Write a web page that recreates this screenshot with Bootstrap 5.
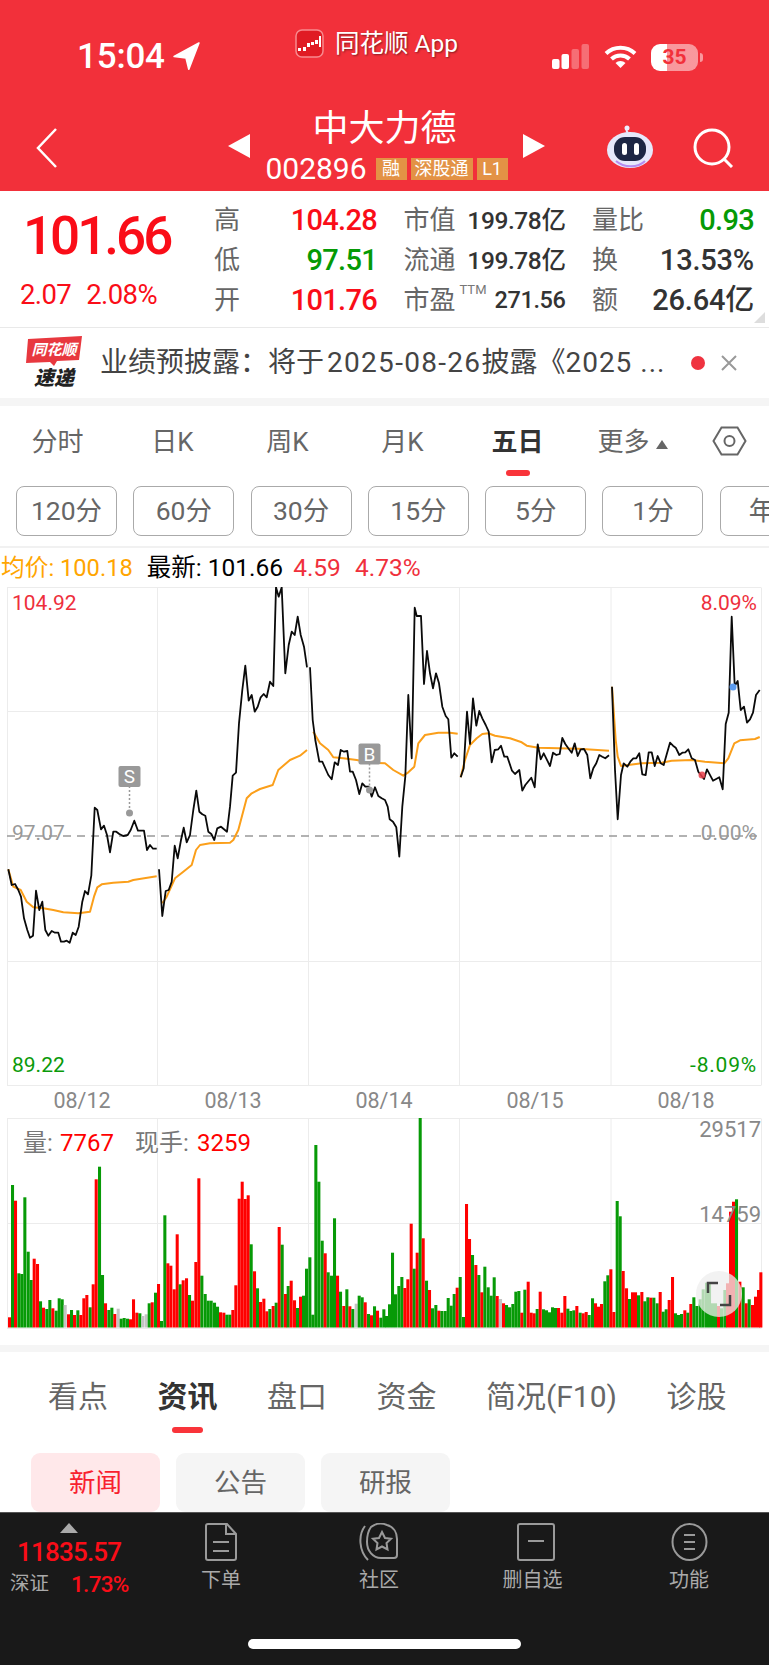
<!doctype html>
<html lang="zh"><head><meta charset="utf-8">
<link href="https://cdn.jsdelivr.net/npm/bootstrap@5.3.0/dist/css/bootstrap.min.css" rel="stylesheet">
<style>
html,body{margin:0;background:#fff;}
body{width:769px;height:1665px;overflow:hidden;font-family:Roboto,"Noto Sans CJK SC",sans-serif;color:#333;}
.hq-head{background:#f2303a;height:191px;color:#fff;}
.hq-status{height:100px;}
.hq-time{width:260px;padding:38px 0 0 77px;font-size:35px;line-height:38px;font-weight:500;letter-spacing:-.2px;gap:7px;}
.hq-app{width:292px;padding:29px 0 0 35px;gap:11px;font-size:24.5px;line-height:30px;text-shadow:1px 1px 2px rgba(0,0,0,.45);}
.hq-sys{padding:44px 0 0 0;gap:14px;}
.hq-batt{width:47px;height:27px;border-radius:9px;background:linear-gradient(90deg,#fff 35%,rgba(255,255,255,.5) 35%);color:#f2303a;font-size:21px;line-height:27px;font-weight:700;text-align:center;}
.hq-nub{width:3px;height:9px;border-radius:0 3px 3px 0;background:rgba(255,255,255,.5);margin-left:2px;}
.hq-nav{height:91px;}
.hq-back{width:228px;padding:28px 0 0 36px;}
.hq-mid{width:317px;}
.hq-title{font-size:36px;line-height:40px;padding-top:9px;padding-right:4px;}
.hq-code{font-size:30px;line-height:28px;gap:4px;margin-top:6px;white-space:nowrap;}
.hq-tag{flex:none;background:#e39245;font-size:18px;line-height:22px;height:22px;width:31px;margin-top:3px;}
.hq-tag1{margin-left:5px;}
.hq-tag3{width:62px;}
.hq-right{padding:25px 0 0 61px;gap:39px;}
.hq-info{height:137px;border-bottom:1px solid #e9e9e9;}
.hq-priceb{width:214px;}
.hq-price{font-size:53px;line-height:60px;font-weight:500;color:#fa0d18;padding:15px 0 0 23px;letter-spacing:-3px;}
.hq-chg{color:#fa0d18;font-size:27.5px;line-height:30px;padding:14px 0 0 20px;gap:15px;letter-spacing:-.6px;}
.hq-grid{display:grid;grid-template-columns:163px 162px 162px;column-gap:26.5px;grid-auto-rows:40px;padding-top:10px;}
.hq-cell{line-height:39px;}
.hq-lab{font-size:26px;color:#666;}
.hq-val{font-size:29px;font-weight:500;letter-spacing:-.7px;}
.hq-val2{font-size:24.5px;font-weight:500;letter-spacing:-.4px;color:#333;}
.hq-val3{font-size:29px;font-weight:500;letter-spacing:-.2px;color:#333;}
.hq-red{color:#fa0d18;}.hq-green{color:#059a05;}
.hq-ttmw{line-height:16px;padding-left:4px;}
.hq-ttm{font-size:13px;color:#777;}
.hq-pe{font-size:23.5px;}
.hq-corner{position:absolute;right:4px;bottom:4px;border-left:11px solid transparent;border-bottom:11px solid #ddd;}
.hq-notice{height:70px;padding-left:25px;}
.hq-ntext{font-size:28px;line-height:36px;color:#444;margin-left:17px;width:576px;white-space:nowrap;}
.hq-ndig{letter-spacing:1.3px;margin-left:3px;}
.hq-ndig2{letter-spacing:1px;}
.hq-dot{width:14px;height:14px;border-radius:50%;background:#ef3340;margin-left:15px;}
.hq-band{height:8px;background:#f5f5f5;}
.hq-tabs{height:80px;}
.hq-tab{width:115px;text-align:center;font-size:26px;line-height:30px;color:#666;position:relative;padding-top:21px;height:80px;}
.hq-tab-on{color:#333;font-weight:700;}
.hq-tab-on::after{content:"";position:absolute;left:46px;top:64px;width:24px;height:6px;border-radius:3px;background:#f9343a;}
.hq-tri{display:inline-block;border:6px solid transparent;border-top:0;border-bottom:9px solid #666;margin-left:6px;vertical-align:middle;}
.hq-chips{height:62px;padding-left:16px;gap:16.3px;overflow:hidden;border-bottom:2px solid #f1f1f1;}
.hq-chip{flex:0 0 101px;height:50px;border:1px solid #aaa;border-radius:8px;text-align:center;font-size:26.5px;line-height:48px;color:#666;}
.hq-avg{height:39px;font-size:24.5px;line-height:40px;padding-left:1px;white-space:nowrap;}
.hq-avg0{color:#ffa500;font-size:23.7px;}
.hq-avg1{color:#000;margin-left:14px;}
.hq-avg2{color:#f0303c;margin-left:10px;}
.hq-avg3{color:#f0303c;margin-left:14px;}
.hq-svg{display:block;}
.hq-tabs2{height:101px;padding-left:48px;gap:49.5px;font-size:30px;line-height:34px;color:#666;padding-top:28px;}
.hq-t2{position:relative;}
.hq-t2-on{font-weight:700;color:#333;}
.hq-t2-on::after{content:"";position:absolute;left:14px;top:47px;width:31px;height:6px;border-radius:3px;background:#f9343a;}
.hq-pills{height:59px;padding-left:31px;gap:16px;}
.hq-pill{width:129px;height:59px;border-radius:9px;background:#f5f5f5;text-align:center;font-size:26.5px;line-height:59px;color:#666;}
.hq-pill-on{background:#ffe8ea;color:#f8212e;}
.hq-bar{height:153px;background:#191919;border-top:1px solid #555;position:relative;color:#aaa;}
.hq-idx{width:143px;}
.hq-idxn{color:#fa0d18;font-size:26px;line-height:30px;font-weight:500;padding-left:17px;letter-spacing:-.8px;}
.hq-uptri{border:9px solid transparent;border-top:0;border-bottom:10px solid #aaa;width:0;margin:10px 0 0 60px;}
.hq-idxl{font-size:19.5px;padding:2px 0 0 10px;line-height:30px;gap:22px;}
.hq-idxp{color:#fa0d18;font-size:22.5px;font-weight:500;letter-spacing:-.7px;}
.hq-item{width:156px;padding-top:10px;font-size:20px;line-height:26px;text-align:center;}
.hq-item svg{display:block;margin:0 auto 6px;}
.hq-item2{padding-left:4px;}
.hq-item3{padding-left:5px;}
.hq-item3 span{margin-left:-6px;}
.hq-home{position:absolute;left:248px;top:126px;width:273px;height:10px;border-radius:5px;background:#fff;}
</style></head>
<body>
<div class="hq-head">
  <div class="hq-status d-flex">
    <div class="hq-time d-flex align-items-start"><span>15:04</span>
      <svg width="28" height="28" viewBox="0 0 26 26" class="mt-1"><path d="M25 1 2 13.5l11 1.2 2.6 10.6z" fill="#fff" stroke="#fff" stroke-linejoin="round" stroke-width="1.5"/></svg></div>
    <div class="hq-app d-flex align-items-start">
      <svg width="29" height="29" viewBox="0 0 29 29"><rect x="1" y="1" width="27" height="27" rx="6" fill="#e01b24" stroke="#f78a8f" stroke-width="1.5"/><g fill="#fff"><rect x="3" y="19" width="3" height="3"/><rect x="8" y="18" width="3" height="4"/><rect x="12" y="14" width="3" height="4"/><rect x="16" y="13" width="3" height="3"/><rect x="20" y="11" width="3" height="4"/><rect x="24" y="7" width="2" height="11"/></g></svg>
      <span>同花顺 App</span></div>
    <div class="hq-sys d-flex align-items-start">
      <svg width="38" height="25" viewBox="0 0 38 25"><rect x="0" y="15" width="7.5" height="10" rx="2" fill="#fff"/><rect x="9.5" y="10" width="7.5" height="15" rx="2" fill="#fff"/><rect x="19.500" y="5" width="7.500" height="20" rx="2" fill="#fff" opacity=".3"/><rect x="29.500" y="0" width="7.500" height="25" rx="2" fill="#fff" opacity=".3"/></svg>
      <svg width="33" height="25" viewBox="0 0 33 25" fill="none" stroke="#fff" stroke-width="4"><path d="M2 9.500a21 21 0 0 1 29 0"/><path d="M7.500 15a13 13 0 0 1 18 0"/><path d="M16.500 24l-5-5a7 7 0 0 1 10 0z" fill="#fff" stroke="none"/></svg>
      <div class="d-flex align-items-center"><div class="hq-batt">35</div><div class="hq-nub"></div></div>
    </div>
  </div>
  <div class="hq-nav d-flex">
    <div class="hq-back"><svg width="21" height="40" viewBox="0 0 21 40" fill="none" stroke="#fff" stroke-width="2.500"><path d="M20 1 2 20l18 19"/></svg></div>
    <div class="hq-mid d-flex align-items-start justify-content-between">
      <svg width="22" height="24" viewBox="0 0 22 24" style="margin-top:34px"><path d="M22 0v24L0 12z" fill="#fff"/></svg>
      <div class="text-center">
        <div class="hq-title">中大力德</div>
        <div class="hq-code d-flex align-items-start justify-content-center"><span>002896</span><span class="hq-tag hq-tag1">融</span><span class="hq-tag hq-tag3">深股通</span><span class="hq-tag">L1</span></div>
      </div>
      <svg width="22" height="24" viewBox="0 0 22 24" style="margin-top:34px"><path d="M0 0v24l22-12z" fill="#fff"/></svg>
    </div>
    <div class="hq-right d-flex align-items-start">
      <svg width="48" height="43" viewBox="0 0 48 43"><path d="M22 8c-2-2-2-5 0-5" fill="none" stroke="#e4e7fb" stroke-width="2"/><circle cx="21" cy="3" r="2.500" fill="#eef"/><ellipse cx="24" cy="25" rx="23" ry="18" fill="#e6e8fb"/><rect x="8" y="12" width="32" height="24" rx="11" fill="#1d2644"/><path d="M10 36c8 7 22 7 29 0" stroke="#b58cf0" stroke-width="2" fill="none"/><rect x="16" y="18" width="5" height="12" rx="2.500" fill="#fff"/><rect x="28" y="18" width="5" height="12" rx="2.500" fill="#fff"/></svg>
      <svg width="41" height="40" viewBox="0 0 41 40" fill="none" stroke="#fff" stroke-width="3" style="margin-top:3px"><circle cx="19" cy="19" r="17"/><path d="M31 31l8 8"/></svg>
    </div>
  </div>
</div>

<div class="hq-info d-flex position-relative">
  <div class="hq-priceb">
    <div class="hq-price">101.66</div>
    <div class="hq-chg d-flex"><span>2.07</span><span>2.08%</span></div>
  </div>
  <div class="hq-grid">
    <div class="hq-cell d-flex justify-content-between"><span class="hq-lab">高</span><span class="hq-val hq-red">104.28</span></div>
    <div class="hq-cell d-flex justify-content-between"><span class="hq-lab">市值</span><span class="hq-val2">199.78亿</span></div>
    <div class="hq-cell d-flex justify-content-between"><span class="hq-lab">量比</span><span class="hq-val hq-green">0.93</span></div>
    <div class="hq-cell d-flex justify-content-between"><span class="hq-lab">低</span><span class="hq-val hq-green">97.51</span></div>
    <div class="hq-cell d-flex justify-content-between"><span class="hq-lab">流通</span><span class="hq-val2">199.78亿</span></div>
    <div class="hq-cell d-flex justify-content-between"><span class="hq-lab">换</span><span class="hq-val3">13.53%</span></div>
    <div class="hq-cell d-flex justify-content-between"><span class="hq-lab">开</span><span class="hq-val hq-red">101.76</span></div>
    <div class="hq-cell d-flex justify-content-between"><span class="hq-lab">市盈</span><span class="flex-grow-1 hq-ttmw"><span class="hq-ttm">TTM</span></span><span class="hq-val2 hq-pe">271.56</span></div>
    <div class="hq-cell d-flex justify-content-between"><span class="hq-lab">额</span><span class="hq-val3">26.64亿</span></div>
  </div>
  <div class="hq-corner"></div>
</div>

<div class="hq-notice d-flex align-items-center">
  <svg width="58" height="56" viewBox="0 0 58 56">
    <path d="M3 4 57 1l-3 24-22 1-3 5-4-4-24 1z" fill="#e8383f"/>
    <text x="29" y="20" text-anchor="middle" font-size="15" font-weight="700" font-style="italic" fill="#fff" font-family="'Noto Sans CJK SC',sans-serif">同花顺</text>
    <text x="29" y="50" text-anchor="middle" font-size="20" font-weight="900" font-style="italic" fill="#222" font-family="'Noto Sans CJK SC',sans-serif">速递</text>
  </svg>
  <div class="hq-ntext">业绩预披露：将于<span class="hq-ndig">2025-08-26</span>披露《<span class="hq-ndig2">2025 ...</span></div>
  <div class="hq-dot"></div>
  <svg width="16" height="16" viewBox="0 0 16 16" class="ms-3" stroke="#999" stroke-width="2"><path d="M1 1l14 14M15 1 1 15"/></svg>
</div>
<div class="hq-band"></div>

<div class="hq-tabs d-flex">
  <div class="hq-tab">分时</div><div class="hq-tab">日K</div><div class="hq-tab">周K</div><div class="hq-tab">月K</div>
  <div class="hq-tab hq-tab-on">五日</div>
  <div class="hq-tab">更多<span class="hq-tri"></span></div>
  <div class="flex-grow-1 text-center pt-4"><svg width="35" height="30" viewBox="0 0 35 30" fill="none" stroke="#666" stroke-width="2" style="margin-top:-4px"><path d="M1.500 15 9.500 1.500h16L33.500 15l-8 13.500h-16z"/><circle cx="17.500" cy="15" r="5"/></svg></div>
</div>
<div class="hq-chips d-flex">
  <div class="hq-chip">120分</div><div class="hq-chip">60分</div><div class="hq-chip">30分</div><div class="hq-chip">15分</div><div class="hq-chip">5分</div><div class="hq-chip">1分</div><div class="hq-chip">年K</div>
</div>
<div class="hq-avg"><span class="hq-avg0">均价: 100.18</span><span class="hq-avg1">最新: 101.66</span><span class="hq-avg2">4.59</span><span class="hq-avg3">4.73%</span></div>

<svg id="hq-price" class="hq-svg" width="769" height="531" viewBox="0 0 769 531"></svg>
<svg id="hq-vol" class="hq-svg" width="769" height="221" viewBox="0 0 769 221"></svg>
<div style="height:6px"></div>
<div class="hq-band" style="height:7px"></div>

<div class="hq-tabs2 d-flex">
  <div class="hq-t2">看点</div><div class="hq-t2 hq-t2-on">资讯</div><div class="hq-t2">盘口</div><div class="hq-t2">资金</div><div class="hq-t2">简况(F10)</div><div class="hq-t2">诊股</div>
</div>
<div class="hq-pills d-flex">
  <div class="hq-pill hq-pill-on">新闻</div><div class="hq-pill">公告</div><div class="hq-pill">研报</div>
</div>

<div class="hq-bar d-flex">
  <div class="hq-idx">
    <div class="hq-uptri"></div>
    <div class="hq-idxn mt-1">11835.57</div>
    <div class="hq-idxl d-flex align-items-center"><span>深证</span><span class="hq-idxp">1.73%</span></div>
  </div>
  <div class="hq-item"><svg width="34" height="38" viewBox="0 0 34 38" fill="none" stroke="#9a9a9a" stroke-width="2"><path d="M2 3a2 2 0 0 1 2-2h19l9 10v24a2 2 0 0 1-2 2H4a2 2 0 0 1-2-2z"/><path d="M22 1v10h10M9 19h16M9 28h16"/></svg>下单</div>
  <div class="hq-item hq-item2"><svg width="40" height="38" viewBox="0 0 40 38" fill="none" stroke="#9a9a9a" stroke-width="2"><path d="M12 4a16 16 0 0 1 16-2c7 2 10 8 10 14v16a3 3 0 0 1-3 3H22c-8 0-14-7-14-16 0-6 1-11 4-15z"/><path d="M6 3C-1 12 0 28 9 37"/><path d="M23 9l3 6 6 .8-4.500 4.200 1 6.500-5.500-3-5.500 3 1-6.500L14 15.800l6-.8z"/></svg>社区</div>
  <div class="hq-item hq-item3"><svg width="38" height="38" viewBox="0 0 38 38" fill="none" stroke="#9a9a9a" stroke-width="2"><rect x="1" y="1" width="36" height="36" rx="2"/><path d="M11 18h16"/></svg><span>删自选</span></div>
  <div class="hq-item"><svg width="37" height="38" viewBox="0 0 37 38" fill="none" stroke="#9a9a9a" stroke-width="2"><ellipse cx="18.500" cy="19" rx="17" ry="18"/><path d="M13 12h11M13 19h11M13 26h11"/></svg>功能</div>
  <div class="hq-home"></div>
</div>

<script src="https://cdn.jsdelivr.net/npm/bootstrap@5.3.0/dist/js/bootstrap.bundle.min.js"></script>
<script>
// chart data digitised from the reference, in 3x crop coordinates
var NS='http://www.w3.org/2000/svg';
function el(p,n,a,t){var e=document.createElementNS(NS,n);for(var k in a)e.setAttribute(k,a[k]);if(t)e.textContent=t;p.appendChild(e);return e;}
function pts(s,off,ox,oy){return s.trim().split(/\s+/).map(function(q){var a=q.split(',');return ((+a[0]+off)/3-ox).toFixed(1)+','+((+a[1])/3-oy).toFixed(1);}).join(' ');}
var P=document.getElementById('hq-price');
var grid='#ececec';
function hl(s,y){el(s,'line',{x1:7,x2:761,y1:y,y2:y,stroke:grid,'stroke-width':1});}
function vl(s,x,h){el(s,'line',{x1:x,x2:x,y1:.5,y2:h,stroke:grid,'stroke-width':1});}
hl(P,.5);hl(P,124.5);hl(P,374.5);hl(P,498.5);
[7.5,157.5,308.5,459.5,611,761.5].forEach(function(x){vl(P,x,498.5);});
function T(s,x,y,str,c,anc,fs,ls){el(s,'text',{x:x,y:y,fill:c,'text-anchor':anc||'start','font-size':fs||21,'letter-spacing':ls||0,'font-family':'Roboto,sans-serif'},str);}
T(P,12,23,'104.92','#ee2f3c');T(P,757,23,'8.09%','#ee2f3c','end');
T(P,12,253,'97.07','#999');T(P,757,253,'0.00%','#999','end');
T(P,12,485,'89.22','#0a9a0a');T(P,757,485,'-8.09%','#0a9a0a','end',21,.8);
el(P,'line',{x1:7,x2:761,y1:249,y2:249,stroke:'#999','stroke-width':1.5,'stroke-dasharray':'8 6'});
var avg=[
 [0,'25,868 40,920 62,930 80,965 100,982 130,985 160,990 190,997 235,1000 270,995 282,950 292,922 305,913 340,908 385,905 400,900 470,889'],
 [0,'487,970 500,950 525,895 550,875 575,855 588,810 600,795 630,790 690,788 700,780 715,750 740,655 755,640 780,627 818,615 835,570 870,540 900,527 921,510'],
 [0,'940,455 960,490 985,510 1000,532 1030,535 1070,540 1110,548 1155,550 1180,570 1210,587 1225,577 1243,560 1255,490 1275,465 1315,458 1350,458 1373,461'],
 [1155,'227,592 240,540 255,495 275,475 292,462 310,460 330,467 375,475 410,487 425,497 460,503 520,505 580,506 672,512'],
 [1155,'681,320 692,480 698,530 708,558 730,555 770,550 830,548 860,542 920,540 960,545 1018,550 1030,535 1048,490 1065,481 1110,477 1124,471']];
var line=[
 [0,'25,868 35,915 45,912 55,930 63,950 72,1015 82,1050 90,1073 99,1067 108,932 118,990 127,965 136,1050 145,1067 155,1053 165,1058 175,1058 183,1085 192,1085 200,1082 209,1088 218,1058 227,1065 236,1040 247,965 255,933 264,943 274,887 284,683 292,690 303,748 312,737 321,765 330,817 340,755 349,755 358,762 370,768 383,765 392,750 403,722 414,752 432,752 441,810 450,795 459,806 470,806'],
 [0,'477,868 487,1008 497,933 506,930 515,905 524,797 533,835 543,780 551,743 560,787 570,765 580,690 589,632 598,695 607,703 616,707 625,755 634,762 643,780 652,745 663,740 681,755 690,680 698,587 708,578 717,430 727,330 736,257 746,362 755,345 764,395 773,380 782,352 791,342 800,352 810,305 820,318 828,22 836,50 845,22 856,280 866,195 875,155 884,165 893,110 902,165 912,200 921,262'],
 [0,'930,262 938,420 946,480 958,545 967,545 985,585 995,598 1004,547 1014,555 1022,510 1032,515 1042,513 1050,575 1058,575 1068,600 1078,642 1087,610 1096,620 1106,620 1115,650 1125,622 1135,648 1145,655 1155,660 1163,680 1169,718 1179,725 1189,742 1198,830 1207,680 1216,590 1225,345 1235,535 1244,83 1250,108 1263,108 1272,312 1281,213 1290,280 1299,325 1308,280 1317,310 1327,380 1337,408 1345,418 1354,533 1363,520 1373,530'],
 [1155,'227,592 236,565 246,395 255,492 264,355 274,437 283,393 292,415 302,435 311,455 320,547 329,510 340,508 348,497 358,530 367,530 381,572 390,582 403,570 412,632 421,615 439,593 449,622 458,493 467,538 476,520 495,558 504,518 514,525 524,522 532,474 541,492 550,505 560,518 569,490 578,528 587,508 597,507 607,525 616,595 625,565 634,550 643,525 652,530 661,535 672,526'],
 [1155,'681,320 690,570 698,718 708,585 716,550 727,560 736,545 745,535 754,535 763,520 772,583 782,585 791,517 800,517 809,558 818,528 827,550 836,555 846,520 855,488 864,497 872,503 883,525 892,518 901,517 910,508 920,535 930,540 940,575 957,597 966,568 984,602 1003,592 1013,628 1022,432 1031,398 1040,110 1049,318 1058,303 1067,390 1077,380 1086,428 1095,418 1104,398 1113,345 1124,330']];
avg.forEach(function(a){el(P,'polyline',{points:pts(a[1],a[0],0,7),fill:'none',stroke:'#fb9f1a','stroke-width':2,'stroke-linejoin':'round'});});
line.forEach(function(a){el(P,'polyline',{points:pts(a[1],a[0],0,7),fill:'none',stroke:'#0a0a0a','stroke-width':1.8,'stroke-linejoin':'round'});});
function mark(x,yTop,yDot,ch){
  el(P,'line',{x1:x,x2:x,y1:yTop+20,y2:yDot,stroke:'#999','stroke-width':1.5,'stroke-dasharray':'2 2'});
  el(P,'circle',{cx:x,cy:yDot,r:3.5,fill:'#999'});
  el(P,'rect',{x:x-11,y:yTop,width:22,height:21,rx:2,fill:'#999'});
  el(P,'text',{x:x,y:yTop+17,'text-anchor':'middle','font-size':19,fill:'#fff','font-family':'Roboto,sans-serif'},ch);
}
mark(129.500,179,226,'S');mark(369.500,156.500,203,'B');
el(P,'circle',{cx:702,cy:188,r:3.500,fill:'#e8404a',opacity:.85});
el(P,'circle',{cx:733,cy:100,r:3.500,fill:'#5c9cf0'});
['08/12','08/13','08/14','08/15','08/18'].forEach(function(d,i){el(P,'text',{x:82+151*i,y:521,'text-anchor':'middle','font-size':21.500,fill:'#888','font-family':'Roboto,sans-serif'},d);});

var V=document.getElementById('hq-vol');
var a='24r652 33g255 42r302 52g520 61g522 70g292 80g455 89g540 98r476 108r492 117g604 126r623 136g627 145g600 154r625 164g632 173g595 182g598 191s615 201r643 210g630 219r645 229g631 238r645 247r595 256r585 266g622 275r553 284r238 294g200 303g525 312r610 322g630 331g623 340r642 350s626 359g656 368g654 378g656 387r658 396r598 406r638 415g640 424s648 434s643 443g610 452r607 462g578 471r552 480g663 490g346 499r490 508r497 518r568 527r403 536g553 545r541 555r535 564g585 573r602 583r486 592r235 601g527 611g582 620g602 629g602 639g608 648g620 657r637 667r638 676g644 685g644 694r630 703r556 713r296 722r245 731r297 740r286 749g433 759r514 768g565 777r606 787r596 796r634 805g627 815r618 824g608 833r381 842g434 852r582 860g558 869r542 879r601 888g624 897r590 906g587 915g506 925g472 934g644 943g135 952g245 962g422 971r460 980g517 990g527 999g355 1008r527 1017g575 1027r618 1036g568 1045r619 1054g627 1064s611 1073g587 1082g592 1091r607 1101g642 1110r646 1119g619 1128r632 1138g653 1147g628';
var b='0g648 9g613 18g458 27g583 37g558 46g531 55r564 64r538 74r371 83g506 92r458 101g54 110r415 120g542 129r570 138g625 148g615 157r632 166g633 176g633 185g594 194g617 203g582 212r563 221g531 231g651 240r312 249r417 258g465 268r495 277g525 286r577 295g500 305g562 314g587 323g532 332r588 342s597 351r610 360g615 369g622 379g612 388g575 397g573 406r638 415g569 425r545 434r638 443r640 452g627 461r575 471g628 480g631 489g637 498g622 507g624 516r624 526r638 535r588 544g626 553g633 562g631 571r618 581g638 590r640 599r636 608g645 618g595 627r610 636r620 645r612 655g544 664g526 673r508 682r636 692g303 701g349 710r513 720r565 729g597 738r577 747r577 756g586 766r576 775g604 784g592 793r593 802g593 812g610 821r576 830g635 839g628 848r600 858r531 867g640 876g645 885g642 895r631 904g638 913r612 922g592 931g618 941g598 950g568 960g548 969g550 978g610 987g610 996r618 1005g625 1015g570 1023r550 1032r335 1041r305 1050g298 1060r545 1070g562 1079r610 1088g598 1098r615 1107r590 1116r570 1123r517';
hl(V,.5);hl(V,105.5);hl(V,210.5);
[7.5,157.5,308.5,459.5,611,761.5].forEach(function(x){vl(V,x,210.5);});
var col={r:'#ff0000',g:'#079a07',s:'#c4c4c4'};
function bars(str,off){str.split(' ').forEach(function(q){var m=q.match(/(\d+)([rgs])(\d+)/);var y=m[3]/3+1100-1118;
  el(V,'rect',{x:((+m[1]+off)/3).toFixed(2),y:y.toFixed(1),width:3.050,height:(209.500-y).toFixed(1),fill:col[m[2]]});});}
bars(a,0);bars(b,1155);
T(V,23,33,'量:','#777','start',24);T(V,60,33,'7767','#ff0000','start',24);
T(V,135,33,'现手:','#777','start',24);T(V,197,33,'3259','#ff0000','start',24);
V.querySelectorAll('text').forEach(function(n){n.setAttribute('font-family','Roboto,"Noto Sans CJK SC",sans-serif');});
T(V,761,19,'29517','#888','end',22);T(V,761,104,'14759','#888','end',22);
el(V,'circle',{cx:719,cy:176,r:23,fill:'#eee',opacity:.75});
el(V,'path',{d:'M708 175v-10h10M730 177v10h-10',fill:'none',stroke:'#444','stroke-width':2.500});
</script>
</body></html>
